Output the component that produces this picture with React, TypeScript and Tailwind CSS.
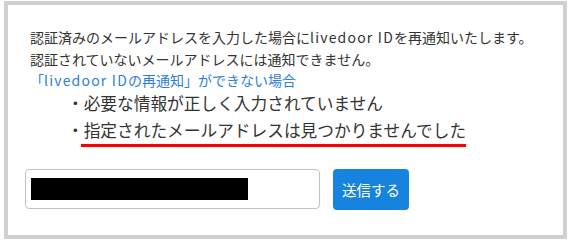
const errors = [
  "必要な情報が正しく入力されていません",
  "指定されたメールアドレスは見つかりませんでした",
];

// Meiryo に近い幅にするため英字だけ字間を広げる
const Latin = ({ children }: { children: string }) => (
  <span className="tracking-[1.2px]">{children}</span>
);

const App = () => {
  return (
    <div className="w-[573px] h-[243px] bg-white pl-[4px] pt-[1px] font-['Noto_Sans_CJK_JP',sans-serif] text-[#333333]">
      <div className="w-[563px] h-[238px] border-4 border-[#d0d0d0] pl-[17px] pt-[22px]">
        {/* 案内文 */}
        <div className="pl-[5px] text-[14px] leading-[21.5px]">
          <p>
            認証済みのメールアドレスを入力した場合に<Latin>livedoor ID</Latin>を再通知いたします。
          </p>
          <p>認証されていないメールアドレスには通知できません。</p>
          <p className="text-[#2b80d6]">
            「<Latin>livedoor ID</Latin>の再通知」ができない場合
          </p>
        </div>

        {/* エラー一覧 */}
        <ul className="mt-[-2px] pl-[42px] text-[16.7px] leading-[27.5px]">
          {errors.map((e, i) => (
            <li key={e}>
              ・
              {i === errors.length - 1 ? (
                <span className="ml-[-3px] pl-[3px] pb-[2px] border-b-[3px] border-[#ff0000]">{e}</span>
              ) : (
                e
              )}
            </li>
          ))}
        </ul>

        {/* 入力フォーム */}
        <div className="mt-[24.5px] flex items-start gap-[13px]">
          <div className="w-[295px] h-[40px] border border-[#b9c5cd] rounded-[4px] flex items-center pl-[5px]">
            <div className="w-[217px] h-[22px] bg-black" />
          </div>
          <button className="w-[76px] h-[41px] rounded-[4px] bg-[#1684df] text-white text-[14.5px]">
            送信する
          </button>
        </div>
      </div>
    </div>
  );
};

export default App;
